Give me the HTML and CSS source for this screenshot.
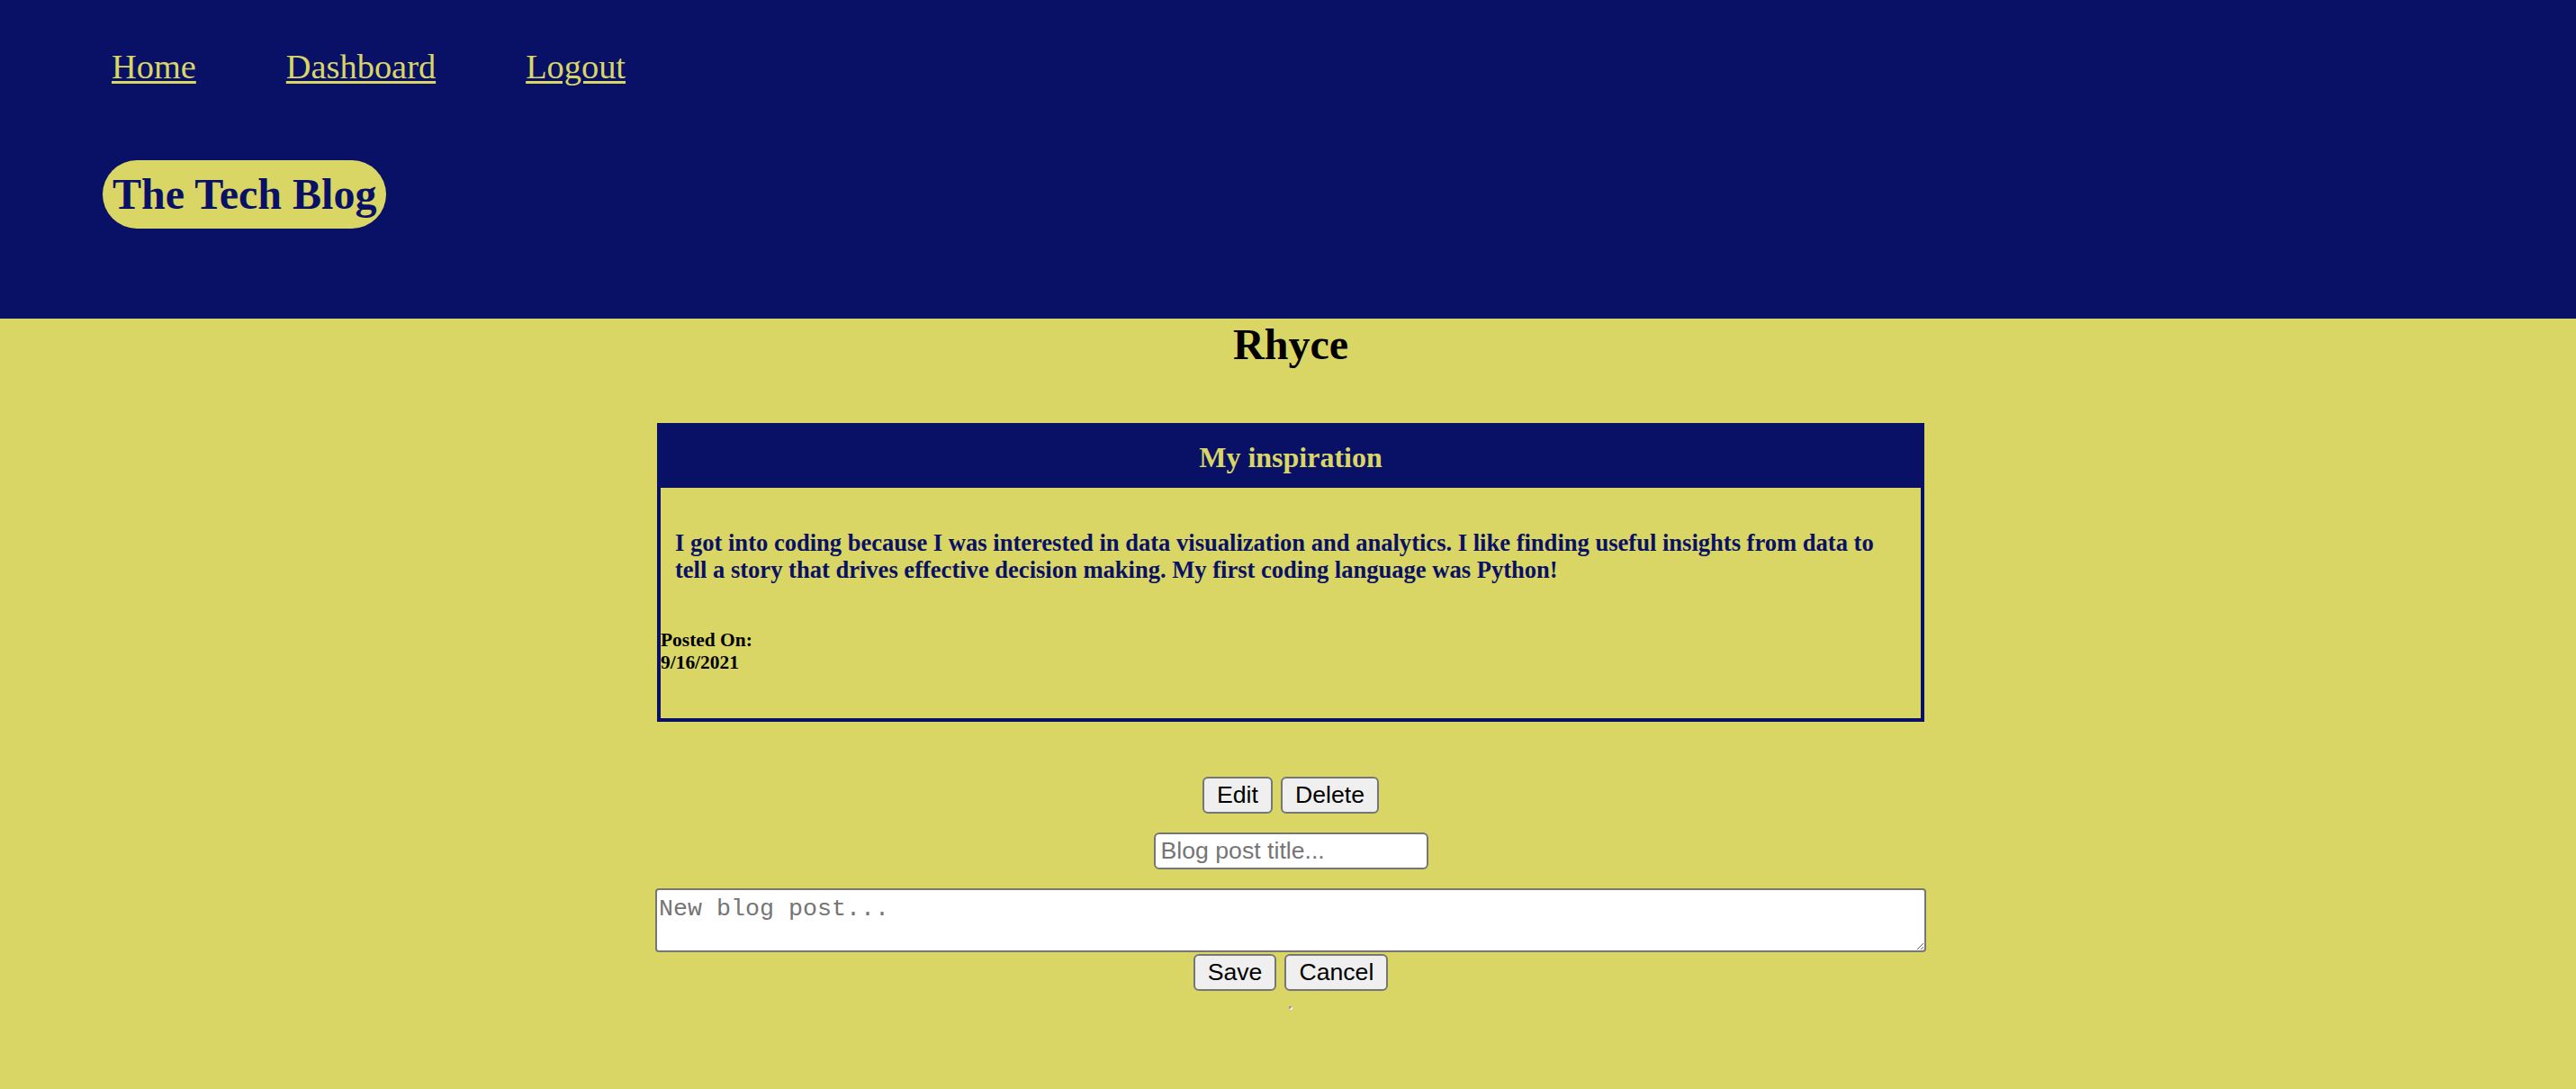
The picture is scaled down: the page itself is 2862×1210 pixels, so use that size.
FILE: index.html
```html
<!DOCTYPE html>
<html lang="en">
<head>
<meta charset="utf-8">
<title>The Tech Blog</title>
<link rel="stylesheet" href="styles.css">
</head>
<body>
<header class="site-header">
  <nav class="nav">
    <a href="#" class="nav-link">Home</a>
    <a href="#" class="nav-link">Dashboard</a>
    <a href="#" class="nav-link">Logout</a>
  </nav>
  <h1 class="brand">The Tech Blog</h1>
</header>
<main class="main">
  <h2 class="user-name">Rhyce</h2>
  <section class="card">
    <div class="card-header">
      <h3 class="card-title">My inspiration</h3>
    </div>
    <div class="card-body">
      <h5 class="card-text">I got into coding because I was interested in data visualization and analytics. I like finding useful insights from data to tell a story that drives effective decision making. My first coding language was Python!</h5>
      <h6 class="card-date">Posted On:<br>9/16/2021</h6>
    </div>
  </section>
  <div class="btn-row first-row">
    <button class="btn">Edit</button>
    <button class="btn">Delete</button>
  </div>
  <div class="field-row">
    <input class="title-input" type="text" placeholder="Blog post title...">
  </div>
  <div class="field-row">
    <textarea class="post-input" placeholder="New blog post..."></textarea>
  </div>
  <div class="btn-row second-row">
    <button class="btn">Save</button>
    <button class="btn">Cancel</button>
  </div>
  <div class="mark-row"><span class="mark"></span></div>
</main>
</body>
</html>
```
FILE: styles.css
```css
html, body {
  margin: 0;
  padding: 0;
}
body {
  background: #d9d665;
  font-family: "Liberation Serif", "Times New Roman", serif;
  min-height: 1210px;
}
.site-header {
  background: #091166;
  padding: 53px 0 100px 114px;
}
.nav {
  display: flex;
  gap: 100px;
  padding-left: 10px;
}
.nav-link {
  color: #d9d665;
  font-size: 38.4px;
  line-height: 43px;
  text-decoration: underline;
  text-decoration-thickness: 3px;
  text-underline-offset: 3px;
}
.brand {
  display: inline-block;
  margin: 82px 0 0 0;
  padding: 11px 11px;
  background: #d9d665;
  color: #091166;
  font-size: 48px;
  line-height: 54px;
  font-weight: bold;
  border-radius: 38px;
}
.main {
  padding-left: 6px;
  padding-bottom: 80px;
  text-align: center;
}
.user-name {
  margin: 2px 0 0;
  font-size: 48px;
  line-height: 54px;
  font-weight: bold;
  color: #000;
}
.card {
  width: 1400px;
  margin: 60px auto 0;
  border: 4px solid #091166;
  text-align: left;
}
.card-header {
  background: #091166;
  margin: -4px -4px 0;
  padding: 20px 0 16px;
  text-align: center;
}
.card-title {
  margin: 0;
  color: #d9d665;
  font-size: 32px;
  line-height: 36px;
  font-weight: bold;
}
.card-body {
  padding: 46px 0 49px;
}
.card-text {
  margin: 0 0 51px;
  padding: 0 40px 0 16px;
  color: #091166;
  font-size: 26.56px;
  line-height: 30px;
  font-weight: bold;
}
.card-date {
  margin: 0;
  color: #000;
  font-size: 21.44px;
  line-height: 25px;
  font-weight: bold;
}
.btn-row {
  display: flex;
  justify-content: center;
  gap: 9px;
}
.first-row {
  margin-top: 61px;
}
.second-row {
  margin-top: 2px;
}
.btn {
  font-family: "Liberation Sans", Arial, sans-serif;
  font-size: 26.67px;
  line-height: 31px;
  padding: 3px 14px;
  border: 2px solid #767676;
  border-radius: 6px;
  background: #efefef;
  color: #000;
  margin: 0;
}
.field-row {
  display: flex;
  justify-content: center;
  margin-top: 21px;
}
.title-input {
  box-sizing: border-box;
  width: 305px;
  height: 41px;
  margin: 0;
  padding: 2px 6px;
  border: 2px solid #767676;
  border-radius: 6px;
  background: #fff;
  font-family: "Liberation Sans", Arial, sans-serif;
  font-size: 26.67px;
}
.title-input::placeholder {
  color: #757575;
}
.post-input {
  box-sizing: border-box;
  width: 1412px;
  height: 71px;
  margin: 0;
  padding: 6px 2px 2px;
  border: 2px solid #767676;
  border-radius: 4px;
  background: #fff;
  font-family: "Liberation Mono", "Courier New", monospace;
  font-size: 26.67px;
  line-height: 30px;
  display: block;
}
.post-input::placeholder {
  color: #757575;
}
.mark-row {
  display: flex;
  justify-content: center;
  margin-top: 17px;
}
.mark {
  display: block;
  width: 0;
  height: 0;
  border-top: 2px solid #9a9a9a;
  border-left: 2px solid #9a9a9a;
  border-bottom: 2px solid #eeeeee;
  border-right: 2px solid #eeeeee;
}
```
